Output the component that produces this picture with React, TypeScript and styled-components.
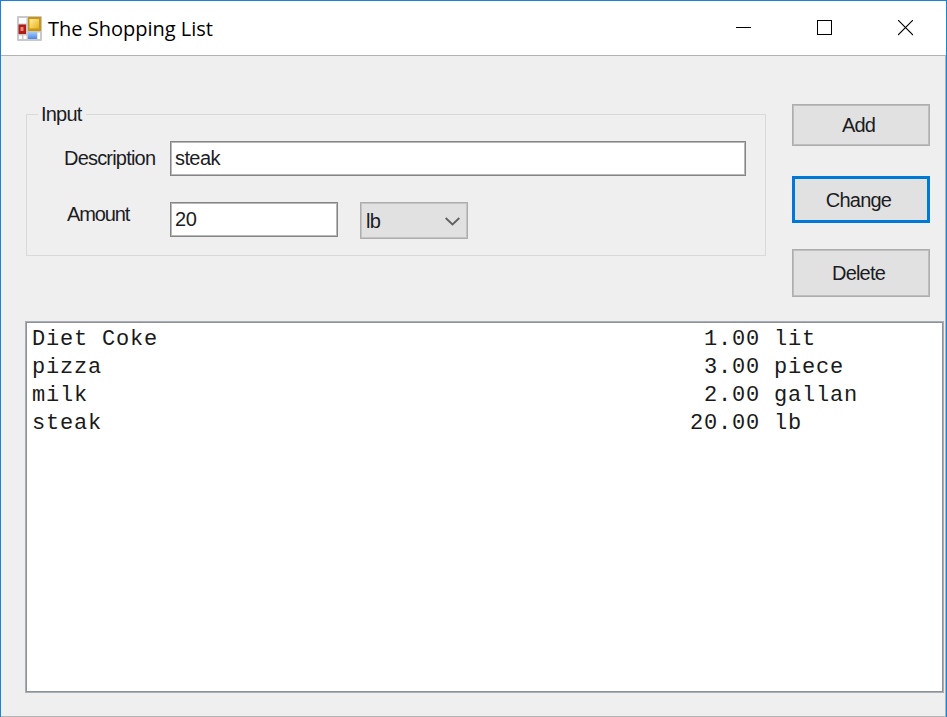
import React from "react";
import styled, { createGlobalStyle } from "styled-components";

const Global = createGlobalStyle`
  * { box-sizing: border-box; }
  body { margin: 0; overflow: hidden; }
`;

const Window = styled.div`
  width: 947px;
  height: 717px;
  display: flex;
  flex-direction: column;
  background: #efefef;
  border: solid #1883d7;
  border-width: 1px 1px 0 1px;
  font-family: "Liberation Sans", Arial, sans-serif;
  font-size: 20px;
  color: #1c1c24;
`;

const TitleBar = styled.header`
  height: 55px;
  flex: none;
  display: flex;
  align-items: center;
  padding-left: 16px;
  background: #fff;
  border-bottom: 1px solid #b4b4b4;
`;

const Title = styled.h1`
  margin: 0 auto 0 6px;
  padding-top: 1px;
  font: 400 20px/28px "Open Sans", "Noto Sans", sans-serif;
  color: #000;
`;

const CaptionButton = styled.button`
  width: 81px;
  height: 54px;
  padding: 0;
  border: 0;
  background: transparent;
  display: flex;
  align-items: center;
  justify-content: center;
`;

const Client = styled.main`
  flex: 1;
  display: flex;
  flex-direction: column;
  padding: 48px 0 23px 24px;
  border: solid #b4b4b4;
  border-width: 0 1px 1px 0;
`;

const TopRow = styled.div`
  display: flex;
  height: 217px;
`;

const Group = styled.fieldset`
  width: 740px;
  height: 152px;
  margin: 0 26px 0 1px;
  padding: 17px 0 0 36px;
  border: 1px solid #d9d9d9;
  box-shadow: none;
`;

const Legend = styled.legend`
  margin-left: -25px;
  padding: 0 5px 0 3px;
  height: 20px;
  line-height: 21px;
`;

const Fit = styled.span<{ $spacing?: number }>`
  letter-spacing: ${(p) => p.$spacing ?? -0.8}px;
  white-space: pre;
`;

const Field = styled.div<{ $gap?: number }>`
  display: flex;
  height: 36px;
  margin-bottom: ${(p) => p.$gap ?? 0}px;
`;

const Label = styled.label<{ $indent?: number; $top?: number }>`
  width: 107px;
  padding-left: ${(p) => p.$indent ?? 0}px;
  padding-top: ${(p) => p.$top ?? 0}px;
  line-height: 24px;
`;

const TextBox = styled.div<{ $width: number }>`
  width: ${(p) => p.$width}px;
  height: 35px;
  padding-left: 4px;
  border: 1px solid #858585;
  box-shadow: inset 0 0 0 1px #b8b8b8;
  background: #fff;
  line-height: 33px;
`;

const Select = styled.div`
  width: 108px;
  height: 37px;
  margin-left: 22px;
  padding: 2px 7px 0 5px;
  display: flex;
  align-items: center;
  justify-content: space-between;
  border: 1px solid #adadad;
  box-shadow: inset 0 0 0 1px #c4c4c4;
  background: #e1e1e1;
`;

const Actions = styled.div`
  width: 138px;
  display: flex;
  flex-direction: column;
`;

const Action = styled.button<{ $height: number; $gap: number; $focus?: boolean }>`
  width: 138px;
  height: ${(p) => p.$height}px;
  margin: 0 0 ${(p) => p.$gap}px;
  padding: 1px 5px 0 0;
  border: ${(p) => (p.$focus ? "3px solid #0078d7" : "1px solid #adadad")};
  box-shadow: ${(p) => (p.$focus ? "none" : "inset 0 0 0 1px #bebebe")};
  background: #e1e1e1;
  color: inherit;
  font: inherit;
`;

const List = styled.div`
  flex: 1;
  margin-right: 1px;
  padding: 4px 0 0 6px;
  border: 1px solid #a9adb4;
  box-shadow: inset 0 0 0 1px #8d9299;
  background: #fff;
  color: #1a1a1a;
  font: 22px/28px "Liberation Mono", "Courier New", monospace;
  letter-spacing: 0.798px;
`;

const Row = styled.div`
  height: 28px;
  white-space: pre;
`;

const items = [
  ["Diet Coke", "1.00", "lit"],
  ["pizza", "3.00", "piece"],
  ["milk", "2.00", "gallan"],
  ["steak", "20.00", "lb"],
];

const FormIcon = () => (
  <svg width="25" height="25" viewBox="0 0 25 25">
    <defs>
      <linearGradient id="gold" x2="1" y2="1">
        <stop stopColor="#fff0a0" />
        <stop offset="1" stopColor="#eab01c" />
      </linearGradient>
      <linearGradient id="blue" x2="0" y2="1">
        <stop stopColor="#a4ccff" />
        <stop offset="1" stopColor="#4f86e6" />
      </linearGradient>
    </defs>
    <rect width="25" height="25" rx="1" fill="#c9c9c9" />
    <path d="M2 2h7.500v5.500H2zM2 19.500h3v3.500H2zM6.500 19.500h3v3.500h-3zM20.500 16.500H23V23h-2.500z" fill="#fff" />
    <rect x="11" y="1" width="13" height="14" fill="#c8960f" />
    <rect x="12.500" y="3" width="9.500" height="9.500" fill="url(#gold)" />
    <rect x="1.500" y="8.500" width="7.500" height="9.500" fill="#ad1e18" />
    <rect x="3.500" y="11" width="3" height="4" fill="#ec8478" />
    <rect x="11" y="16" width="9" height="7" fill="url(#blue)" />
  </svg>
);

export default function App() {
  return (
    <Window>
      <Global />
      <TitleBar>
        <FormIcon />
        <Title>The Shopping List</Title>
        <CaptionButton aria-label="Minimize">
          <svg width="15" height="16" shapeRendering="crispEdges">
            <path d="M0 7h15v1H0z" />
          </svg>
        </CaptionButton>
        <CaptionButton aria-label="Maximize">
          <svg width="15" height="16" shapeRendering="crispEdges">
            <path d="M.5.5h14v14H.5z" fill="none" stroke="#000" />
          </svg>
        </CaptionButton>
        <CaptionButton aria-label="Close">
          <svg width="15" height="16">
            <path d="M0 0l15 15M15 0L0 15" stroke="#000" strokeWidth="1.100" />
          </svg>
        </CaptionButton>
      </TitleBar>
      <Client>
        <TopRow>
          <Group>
            <Legend><Fit>Input</Fit></Legend>
            <Field $gap={25}>
              <Label $indent={1} $top={5}><Fit>Description</Fit></Label>
              <TextBox $width={576}><Fit $spacing={-0.6}>steak</Fit></TextBox>
            </Field>
            <Field>
              <Label $indent={4}><Fit $spacing={-1.1}>Amount</Fit></Label>
              <TextBox $width={168}><Fit $spacing={-0.3}>20</Fit></TextBox>
              <Select>
                <Fit>lb</Fit>
                <svg width="15" height="9" viewBox="0 0 15 9">
                  <path d="M.7 1l6.800 6.500L14.300 1" fill="none" stroke="#606060" strokeWidth="1.800" />
                </svg>
              </Select>
            </Field>
          </Group>
          <Actions>
            <Action $height={42} $gap={30}><Fit>Add</Fit></Action>
            <Action $height={47} $gap={26} $focus><Fit>Change</Fit></Action>
            <Action $height={48} $gap={0}><Fit>Delete</Fit></Action>
          </Actions>
        </TopRow>
        <List>
          {items.map(([name, amount, unit]) => (
            <Row key={name}>{name.padEnd(40) + amount.padStart(12) + " " + unit}</Row>
          ))}
        </List>
      </Client>
    </Window>
  );
}
